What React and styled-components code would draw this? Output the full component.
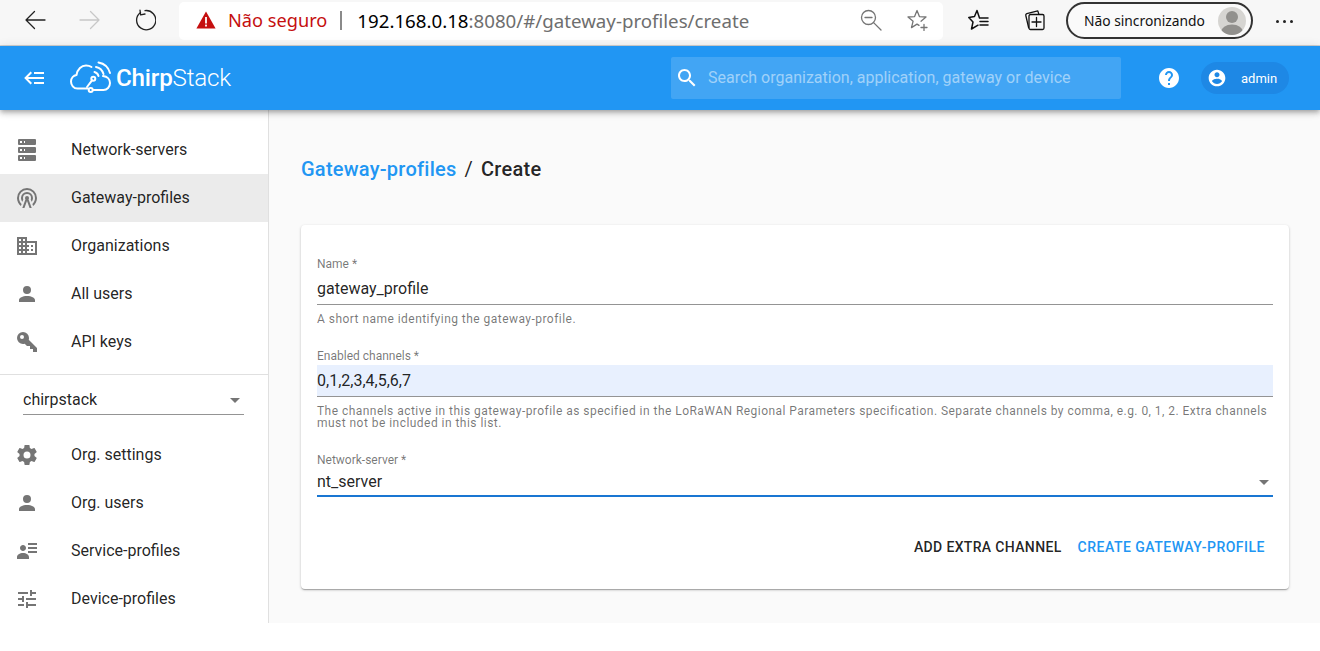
import React from "react";
import styled, { createGlobalStyle } from "styled-components";

const GlobalStyle = createGlobalStyle`
  html, body {
    margin: 0;
    padding: 0;
    height: 100%;
    overflow: hidden;
    background: #fff;
    font-family: Roboto, "Liberation Sans", sans-serif;
  }
  * { box-sizing: border-box; }
`;

const Page = styled.div`
  width: 1320px;
  height: 651px;
  display: flex;
  flex-direction: column;
  background: #fff;
`;

/* browser chrome */
const BrowserBar = styled.div`
  height: 46px;
  flex: none;
  display: flex;
  align-items: flex-start;
  padding: 2px 0 0 7px;
  background: #f7f7f7;
  border-bottom: 1px solid #d2d2d2;
  font-family: "Noto Sans", "Open Sans", sans-serif;
`;
const NavButton = styled.div`
  width: 55px;
  height: 36px;
  flex: none;
  display: flex;
  align-items: center;
  justify-content: center;
`;
const UrlBar = styled.div`
  width: 764px;
  height: 38px;
  margin-left: 7px;
  flex: none;
  display: flex;
  align-items: center;
  padding: 0 14px 2px 17px;
  background: #fff;
  border-radius: 5px;
`;
const Insecure = styled.span`
  margin-left: 12px;
  color: #c50f0f;
  font-size: 18.2px;
  white-space: nowrap;
`;
const UrlDivider = styled.span`
  width: 2px;
  height: 19px;
  margin: 0 15px 0 13px;
  background: #8a8a8a;
`;
const UrlHost = styled.span`
  color: #000;
  font-size: 18.7px;
  white-space: nowrap;
`;
const UrlPath = styled.span`
  color: #6e6e6e;
  font-size: 18.7px;
  white-space: nowrap;
`;
const UrlActions = styled.div`
  margin-left: auto;
  display: flex;
  align-items: center;
  gap: 25px;
`;
const ToolIcons = styled.div`
  margin-left: 25px;
  width: 98px;
  flex: none;
  display: flex;
  align-items: center;
  gap: 34px;
  height: 36px;
`;
const SyncPill = styled.div`
  width: 187px;
  height: 37px;
  flex: none;
  display: flex;
  align-items: center;
  justify-content: space-between;
  padding: 0 5px 0 16px;
  border: 2px solid #333;
  border-radius: 19px;
  background: #fafafa;
  color: #111;
  font-size: 13.8px;
  white-space: nowrap;
`;
const Avatar = styled.div`
  width: 28px;
  height: 28px;
  flex: none;
  border-radius: 50%;
  background: #d6d5d2;
  overflow: hidden;
`;
const MoreDots = styled.div`
  margin-left: 23px;
  height: 38px;
  display: flex;
  align-items: center;
  gap: 4px;
`;
const Dot = styled.span`
  width: 3px;
  height: 3px;
  background: #222;
  border-radius: 50%;
`;

/* app bar */
const AppBar = styled.header`
  position: relative;
  z-index: 2;
  height: 64px;
  flex: none;
  display: flex;
  align-items: center;
  padding: 0 31px 0 23px;
  background: #2196f3;
  box-shadow: 0 2px 4px -1px rgba(0,0,0,.2), 0 4px 5px 0 rgba(0,0,0,.14), 0 1px 10px 0 rgba(0,0,0,.12);
`;
const Logo = styled.div`
  margin-left: 21px;
  display: flex;
  align-items: center;
  color: #fff;
`;
const LogoText = styled.span`
  margin-left: 4px;
  font-size: 24.2px;
  font-weight: 300;
  letter-spacing: -0.2px;
  b { font-weight: 500; }
`;
const SearchBox = styled.div`
  width: 450px;
  height: 42px;
  margin-left: auto;
  display: flex;
  align-items: center;
  padding-left: 4px;
  background: rgba(255,255,255,.15);
  border-radius: 2px;
  color: rgba(255,255,255,.5);
  font-size: 16px;
`;
const SearchText = styled.span`
  margin-left: 9px;
  margin-bottom: 2px;
  white-space: nowrap;
`;
const HelpButton = styled.div`
  width: 24px;
  height: 24px;
  margin: 0 20px 0 36px;
  display: flex;
`;
const UserChip = styled.div`
  width: 88px;
  height: 32px;
  display: flex;
  align-items: center;
  padding-left: 6px;
  border-radius: 16px;
  background: #1e88e5;
  color: #fff;
  font-size: 13px;
`;
const UserName = styled.span`
  margin-left: 14px;
`;

/* body */
const Main = styled.div`
  flex: none;
  height: 513px;
  display: flex;
`;
const Sidebar = styled.nav`
  width: 269px;
  flex: none;
  padding-top: 16px;
  overflow: hidden;
  background: #fff;
  border-right: 1px solid #e0e0e0;
`;
const NavItem = styled.div`
  height: 48px;
  display: flex;
  align-items: center;
  padding-left: 15px;
  background: ${(p) => (p.$active ? "#ebebeb" : "transparent")};
  color: rgba(0,0,0,.87);
  font-size: 16px;
`;
const NavLabel = styled.span`
  margin-left: 32px;
  margin-bottom: 2px;
`;
const NavDivider = styled.div`
  height: 1px;
  margin-top: 8px;
  background: #e0e0e0;
`;
const OrgSelect = styled.div`
  height: 32px;
  margin: 8px 24px 16px 23px;
  display: flex;
  align-items: center;
  justify-content: space-between;
  padding-top: 1px;
  border-bottom: 1px solid #949494;
  color: rgba(0,0,0,.87);
  font-size: 16px;
`;
const Caret = styled.span`
  width: 0;
  height: 0;
  margin-right: ${(p) => p.$right || 4}px;
  margin-top: 3px;
  border-left: 5px solid transparent;
  border-right: 5px solid transparent;
  border-top: 5px solid rgba(0,0,0,.54);
`;

const Content = styled.main`
  flex: 1;
  padding: 32px 31px 0 32px;
  background: #fafafa;
`;
const TitleRow = styled.div`
  height: 54px;
  display: flex;
  align-items: center;
  font-size: 20px;
  font-weight: 500;
  letter-spacing: 0.25px;
  color: rgba(0,0,0,.87);
  margin-bottom: 29px;
`;
const TitleLink = styled.span`
  color: #2196f3;
`;
const TitleSep = styled.span`
  margin: 0 8px;
  font-weight: 400;
`;
const Card = styled.section`
  height: 364px;
  padding: 32px 16px 0;
  background: #fff;
  border-radius: 4px;
  box-shadow: 0 1px 3px 0 rgba(0,0,0,.2), 0 1px 1px 0 rgba(0,0,0,.14), 0 2px 1px -1px rgba(0,0,0,.12);
`;
const Field = styled.div`
  margin-bottom: 24px;
`;
const Label = styled.div`
  height: 12px;
  line-height: 14px;
  font-size: 12px;
  color: rgba(0,0,0,.54);
`;
const Input = styled.div`
  height: ${(p) => (p.$focused ? 28 : 32)}px;
  margin-top: 4px;
  display: flex;
  align-items: center;
  justify-content: space-between;
  padding-bottom: ${(p) => (p.$focused ? 2 : 0)}px;
  font-size: 16px;
  color: rgba(0,0,0,.87);
  background: ${(p) => (p.$filled ? "#e8f0fe" : "transparent")};
  border-bottom: ${(p) => (p.$focused ? "2px solid #1976d2" : "1px solid #949494")};
`;
const Helper = styled.div`
  margin-top: 8px;
  line-height: 12px;
  font-size: 12px;
  letter-spacing: 0.46px;
  color: rgba(0,0,0,.54);
`;
const Actions = styled.div`
  margin-top: 32px;
  display: flex;
  justify-content: flex-end;
`;
const Button = styled.div`
  height: 36px;
  display: flex;
  align-items: center;
  padding: 0 8px;
  font-size: 14px;
  font-weight: 500;
  letter-spacing: ${(p) => (p.$primary ? 0.5 : 0.35)}px;
  text-transform: uppercase;
  color: ${(p) => (p.$primary ? "#2196f3" : "rgba(0,0,0,.87)")};
`;

/* icons */
const Svg = styled.svg`
  flex: none;
  display: block;
  fill: ${(p) => p.$color || "#757575"};
`;
const Icon = ({ d, size = 24, color }) => (
  <Svg viewBox="0 0 24 24" width={size} height={size} $color={color}>
    <path d={d} />
  </Svg>
);
const LineSvg = styled.svg`
  flex: none;
  display: block;
  fill: none;
  stroke: ${(p) => p.$color || "#222"};
  stroke-width: ${(p) => p.$weight || 1.3};
  stroke-linecap: round;
  stroke-linejoin: round;
`;

const ICONS = {
  server: "M4,1H20A1,1 0 0,1 21,2V6A1,1 0 0,1 20,7H4A1,1 0 0,1 3,6V2A1,1 0 0,1 4,1M4,9H20A1,1 0 0,1 21,10V14A1,1 0 0,1 20,15H4A1,1 0 0,1 3,14V10A1,1 0 0,1 4,9M4,17H20A1,1 0 0,1 21,18V22A1,1 0 0,1 20,23H4A1,1 0 0,1 3,22V18A1,1 0 0,1 4,17M9,5H10V3H9V5M9,13H10V11H9V13M9,21H10V19H9V21M5,3V5H7V3H5M5,11V13H7V11H5M5,19V21H7V19H5Z",
  gateway: "M12,10A2,2 0 0,1 14,12C14,12.5 13.82,12.94 13.53,13.29L16.7,22H14.57L12,14.93L9.43,22H7.3L10.47,13.29C10.18,12.94 10,12.5 10,12A2,2 0 0,1 12,10M12,8A4,4 0 0,0 8,12C8,12.5 8.1,13 8.28,13.46L7.4,15.86C6.53,14.81 6,13.47 6,12A6,6 0 0,1 12,6A6,6 0 0,1 18,12C18,13.47 17.47,14.81 16.6,15.86L15.72,13.46C15.9,13 16,12.5 16,12A4,4 0 0,0 12,8M12,4A8,8 0 0,0 4,12C4,14.36 5,16.5 6.64,17.94L5.92,19.94C3.54,18.11 2,15.23 2,12A10,10 0 0,1 12,2A10,10 0 0,1 22,12C22,15.23 20.46,18.11 18.08,19.94L17.36,17.94C19,16.5 20,14.36 20,12A8,8 0 0,0 12,4Z",
  domain: "M12 7V3H2v18h20V7H12zM6 19H4v-2h2v2zm0-4H4v-2h2v2zm0-4H4V9h2v2zm0-4H4V5h2v2zm4 12H8v-2h2v2zm0-4H8v-2h2v2zm0-4H8V9h2v2zm0-4H8V5h2v2zm10 12h-8v-2h2v-2h-2v-2h2v-2h-2V9h8v10zm-2-8h-2v2h2v-2zm0 4h-2v2h2v-2z",
  account: "M12,4A4,4 0 0,1 16,8A4,4 0 0,1 12,12A4,4 0 0,1 8,8A4,4 0 0,1 12,4M12,14C16.42,14 20,15.79 20,18V20H4V18C4,15.79 7.58,14 12,14Z",
  key: "M22,18V22H18V19H15V16H12L9.74,13.74C9.19,13.91 8.61,14 8,14A6,6 0 0,1 2,8A6,6 0 0,1 8,2A6,6 0 0,1 14,8C14,8.61 13.91,9.19 13.74,9.74L22,18M7,5A2,2 0 0,0 5,7A2,2 0 0,0 7,9A2,2 0 0,0 9,7A2,2 0 0,0 7,5Z",
  cog: "M12,15.5A3.5,3.5 0 0,1 8.5,12A3.5,3.5 0 0,1 12,8.5A3.5,3.5 0 0,1 15.5,12A3.5,3.5 0 0,1 12,15.5M19.43,12.97C19.47,12.65 19.5,12.33 19.5,12C19.5,11.67 19.47,11.34 19.43,11L21.54,9.37C21.73,9.22 21.78,8.95 21.66,8.73L19.66,5.27C19.54,5.05 19.27,4.96 19.05,5.05L16.56,6.05C16.04,5.66 15.5,5.32 14.87,5.07L14.5,2.42C14.46,2.18 14.25,2 14,2H10C9.75,2 9.54,2.18 9.5,2.42L9.13,5.07C8.5,5.32 7.96,5.66 7.44,6.05L4.95,5.05C4.73,4.96 4.46,5.05 4.34,5.27L2.34,8.73C2.21,8.95 2.27,9.22 2.46,9.37L4.57,11C4.53,11.34 4.5,11.67 4.5,12C4.5,12.33 4.53,12.65 4.57,12.97L2.46,14.63C2.27,14.78 2.21,15.05 2.34,15.27L4.34,18.73C4.46,18.95 4.73,19.03 4.95,18.95L7.44,17.94C7.96,18.34 8.5,18.68 9.13,18.93L9.5,21.58C9.54,21.82 9.75,22 10,22H14C14.25,22 14.46,21.82 14.5,21.58L14.87,18.93C15.5,18.67 16.04,18.34 16.56,17.94L19.05,18.95C19.27,19.03 19.54,18.95 19.66,18.73L21.66,15.27C21.78,15.05 21.73,14.78 21.54,14.63L19.43,12.97Z",
  details: "M11,9C11,10.66 9.66,12 8,12C6.34,12 5,10.66 5,9C5,7.34 6.34,6 8,6C9.66,6 11,7.34 11,9M14,20H2V18C2,15.79 4.69,14 8,14C11.31,14 14,15.79 14,18M22,12V14H13V12M22,8V10H13V8M22,4V6H13V4Z",
  tune: "M3 17v2h6v-2H3zM3 5v2h10V5H3zm10 16v-2h8v-2h-8v-2h-2v6h2zM7 9v2H3v2h4v2h2V9H7zm14 4v-2H11v2h10zm-6-4h2V7h4V5h-4V3h-2v6z",
  help: "M12 2C6.48 2 2 6.48 2 12s4.48 10 10 10 10-4.48 10-10S17.52 2 12 2zm1 17h-2v-2h2v2zm2.07-7.75l-.9.92C13.45 12.9 13 13.5 13 15h-2v-.5c0-1.1.45-2.1 1.17-2.83l1.24-1.26c.37-.36.59-.86.59-1.41 0-1.1-.9-2-2-2s-2 .9-2 2H8c0-2.21 1.79-4 4-4s4 1.79 4 4c0 .88-.36 1.68-.93 2.25z",
  accountCircle: "M12 2C6.48 2 2 6.48 2 12s4.48 10 10 10 10-4.48 10-10S17.52 2 12 2zm0 3c1.66 0 3 1.34 3 3s-1.34 3-3 3-3-1.34-3-3 1.34-3 3-3zm0 14.2c-2.5 0-4.71-1.28-6-3.22.03-1.99 4-3.08 6-3.08 1.99 0 5.97 1.09 6 3.08-1.29 1.94-3.5 3.22-6 3.22z",
  search: "M15.5 14h-.79l-.28-.27C15.41 12.59 16 11.11 16 9.5 16 5.91 13.09 3 9.5 3S3 5.91 3 9.5 5.91 16 9.5 16c1.61 0 3.09-.59 4.23-1.57l.27.28v.79l5 4.99L20.49 19l-4.99-5zm-6 0C7.01 14 5 11.99 5 9.5S7.01 5 9.5 5 14 7.01 14 9.5 11.99 14 9.5 14z",
  backburger: "M5,13L9,17L7.6,18.42L1.18,12L7.6,5.58L9,7L5,11H21V13H5M21,6V8H11V6H21M21,16V18H11V16H21Z",
};

const ArrowIcon = ({ dir, color }) => (
  <LineSvg viewBox="0 0 22 20" width="22" height="20" $color={color}>
    {dir === "back" ? <path d="M21 10H2M10.5 1.5L2 10l8.5 8.5" /> : <path d="M1 10h19M11.5 1.5L20 10l-8.5 8.5" />}
  </LineSvg>
);
const ReloadIcon = () => (
  <LineSvg viewBox="0 0 22 22" width="22" height="22">
    <path d="M6.5 3.4A9.6 9.6 0 1 0 11 1.6" />
    <path d="M6 1.2l.6 4.6 4.4-.8" />
  </LineSvg>
);
const WarningIcon = () => (
  <svg viewBox="0 0 20 18" width="20" height="18">
    <path d="M10 0.5L19.6 17.5H0.4Z" fill="#c50f0f" />
    <rect x="9.1" y="6" width="1.8" height="6.5" fill="#fff" />
    <rect x="9.1" y="13.6" width="1.8" height="1.9" fill="#fff" />
  </svg>
);
const ZoomOutIcon = () => (
  <LineSvg viewBox="0 0 22 22" width="22" height="22" $color="#757575">
    <circle cx="8.5" cy="8.5" r="7" />
    <path d="M5 8.5h7M13.6 13.6L21 21" />
  </LineSvg>
);
const StarPlusIcon = () => (
  <LineSvg viewBox="0 0 22 22" width="22" height="22" $color="#757575">
    <path d="M14 12.2L19 8L12.4 7.6L10 1.5L7.6 7.6L1 8L6.1 12.2L4.5 18.6L10 15.1L12 16.4" />
    <path d="M17 15.5v6M14 18.5h6" />
  </LineSvg>
);
const FavoritesIcon = () => (
  <LineSvg viewBox="0 0 22 22" width="22" height="22" $color="#111" $weight="1.5">
    <path d="M20 9H11.5L9 1.5L6.5 7.5L0.8 8.5L5 13L3.5 20L10 16.2" />
    <path d="M12 12.5h8M12 16h8" />
  </LineSvg>
);
const CollectionsIcon = () => (
  <LineSvg viewBox="0 0 22 22" width="22" height="22" $color="#111">
    <rect x="5" y="5.5" width="15" height="15" rx="1.5" />
    <path d="M12.5 8.5v9M8 13h9" />
    <path d="M4.6 18.5L1.8 6.5a1.5 1.5 0 0 1 1-1.8l11-2.8 1 3.2" />
  </LineSvg>
);
const LogoMark = () => (
  <LineSvg viewBox="0 0 44 34" width="44" height="34" $color="#fff" $weight="2">
    <path d="M20 27.5H9.5C5.5 27.5 3 24 3 20.5C3 17 5.5 14.5 8.5 14C9.5 8 13.5 4.5 18 4.5C20 4.5 22 5 23.5 6" />
    <path d="M35 15C39.5 15.5 42 18.5 42 22C42 26 39 29 35.5 29H25" />
    <circle cx="22.7" cy="29" r="2" />
    <circle cx="25.3" cy="17.7" r="2" />
    <path d="M24 19.3L19 26" />
    <path d="M28 6C31.5 6.7 34.5 9.5 35.5 13" />
    <path d="M30.5 1.5C36 2.5 40.5 6.5 42 12" />
    <path d="M26.5 11C28.5 11.5 30 13 30.5 15" />
  </LineSvg>
);

const topNav = [
  { icon: "server", label: "Network-servers" },
  { icon: "gateway", label: "Gateway-profiles", active: true },
  { icon: "domain", label: "Organizations" },
  { icon: "account", label: "All users" },
  { icon: "key", label: "API keys" },
];
const orgNav = [
  { icon: "cog", label: "Org. settings" },
  { icon: "account", label: "Org. users" },
  { icon: "details", label: "Service-profiles" },
  { icon: "tune", label: "Device-profiles" },
];

function App() {
  const renderItem = (item) => (
    <NavItem key={item.label} $active={item.active}>
      <Icon d={ICONS[item.icon]} />
      <NavLabel>{item.label}</NavLabel>
    </NavItem>
  );

  return (
    <Page>
      <GlobalStyle />
      <BrowserBar>
        <NavButton><ArrowIcon dir="back" /></NavButton>
        <NavButton><ArrowIcon dir="forward" color="#c8c8c8" /></NavButton>
        <NavButton><ReloadIcon /></NavButton>
        <UrlBar>
          <WarningIcon />
          <Insecure>Não seguro</Insecure>
          <UrlDivider />
          <UrlHost>192.168.0.18</UrlHost>
          <UrlPath>:8080/#/gateway-profiles/create</UrlPath>
          <UrlActions>
            <ZoomOutIcon />
            <StarPlusIcon />
          </UrlActions>
        </UrlBar>
        <ToolIcons>
          <FavoritesIcon />
          <CollectionsIcon />
        </ToolIcons>
        <SyncPill>
          Não sincronizando
          <Avatar>
            <svg viewBox="0 0 28 28" width="28" height="28">
              <circle cx="14" cy="10" r="6" fill="#91908d" />
              <ellipse cx="14" cy="25" rx="11" ry="7.5" fill="#91908d" />
            </svg>
          </Avatar>
        </SyncPill>
        <MoreDots><Dot /><Dot /><Dot /></MoreDots>
      </BrowserBar>

      <AppBar>
        <Icon d={ICONS.backburger} color="#fff" />
        <Logo>
          <LogoMark />
          <LogoText><b>Chirp</b>Stack</LogoText>
        </Logo>
        <SearchBox>
          <Icon d={ICONS.search} color="#fff" />
          <SearchText>Search organization, application, gateway or device</SearchText>
        </SearchBox>
        <HelpButton><Icon d={ICONS.help} color="#fff" /></HelpButton>
        <UserChip>
          <Icon d={ICONS.accountCircle} size={20} color="#fff" />
          <UserName>admin</UserName>
        </UserChip>
      </AppBar>

      <Main>
        <Sidebar>
          {topNav.map(renderItem)}
          <NavDivider />
          <OrgSelect>
            chirpstack
            <Caret />
          </OrgSelect>
          {orgNav.map(renderItem)}
        </Sidebar>
        <Content>
          <TitleRow>
            <TitleLink>Gateway-profiles</TitleLink>
            <TitleSep>/</TitleSep>
            Create
          </TitleRow>
          <Card>
            <Field>
              <Label>Name *</Label>
              <Input>gateway_profile</Input>
              <Helper>A short name identifying the gateway-profile.</Helper>
            </Field>
            <Field>
              <Label>Enabled channels *</Label>
              <Input $filled>0,1,2,3,4,5,6,7</Input>
              <Helper>
                The channels active in this gateway-profile as specified in the LoRaWAN Regional Parameters specification. Separate channels by comma, e.g. 0, 1, 2. Extra channels must not be included in this list.
              </Helper>
            </Field>
            <Field>
              <Label>Network-server *</Label>
              <Input $focused>
                nt_server
                <Caret />
              </Input>
            </Field>
            <Actions>
              <Button>Add extra channel</Button>
              <Button $primary>Create gateway-profile</Button>
            </Actions>
          </Card>
        </Content>
      </Main>
    </Page>
  );
}

export default App;
